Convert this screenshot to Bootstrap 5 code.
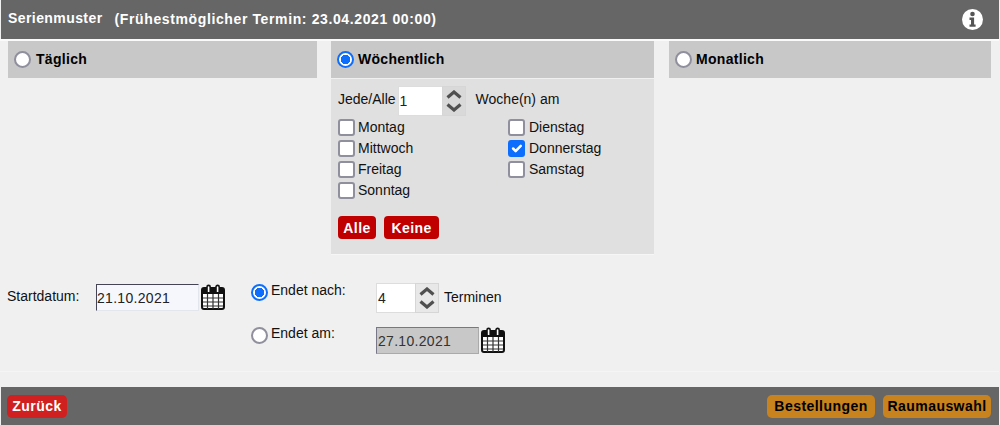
<!DOCTYPE html>
<html lang="de">
<head>
<meta charset="utf-8">
<title>Serienmuster</title>
<link href="https://cdn.jsdelivr.net/npm/bootstrap@5.3.0/dist/css/bootstrap.min.css" rel="stylesheet">
<style>
html,body{height:425px;overflow:hidden}
body{font-family:"Liberation Sans",Arial,sans-serif;font-size:14px;line-height:1.2;color:#111;background:#f0f0f0;margin:0}
.bar-top,.bar-bottom{background:#666;margin:0 1px;color:#fff}
.bar-top{height:39px;padding:0 7px;font-weight:700}
.title-a{letter-spacing:.42px;margin-top:-1px}
.title-b{letter-spacing:.62px;margin-left:12px}
.info-ico{margin-right:9px}
.main-area{height:333px;padding-left:8px;border-top:2px solid #fafafa;border-bottom:1px solid #f5f5f5;margin:0 1px 0 0}
.pane-a{width:309px}.pane-b{width:323px;margin-left:14px}.pane-c{width:322px;margin-left:15px}
.pane-head{height:37px;background:#c8c8c8;font-weight:700;padding:10px 6px;letter-spacing:.3px;color:#000}
.pane-body{background:#e0e0e0;height:175px;margin-top:1px;padding:7px 7px;box-shadow:0 1px 0 #f6f6f6}
.form-check-input.rb,.form-check-input.cb{width:17px;height:17px;margin:0;border:2px solid #8f8f9d;background-color:#fff;flex:none}
.form-check-input.rb{border-radius:50%}
.form-check-input.cb{border-radius:3px}
.form-check-input.rb:checked{background-color:#fff;border-color:#0d6efd;background-image:radial-gradient(circle,#0d6efd 0 4.5px,#fff 5px)}
.form-check-input.cb:checked{background-color:#0d6efd;border:0;background-size:17px 17px;background-position:center;background-origin:border-box}
.form-check-input:focus{box-shadow:none}
.num-box{height:30px;background:#fff;border:1px solid #ddd;border-right:0;padding:0 0 0 1px;font-size:14px;color:#222;font-family:inherit;border-radius:0;outline:0}
.spin-box{width:24px;height:30px;background:rgba(0,0,0,.03);border:1px solid #d6d6d6;gap:4px}
.text-up{margin-top:-4px}
.jede-lbl{margin-right:2px}
.woche-lbl{margin-left:10px}
.day-grid{display:grid;grid-template-columns:170px 1fr;row-gap:4px;margin-top:3px}
.day-item{height:17px;gap:3px;display:flex;align-items:center}
.day-item:nth-child(even){gap:4px}
.act-btn{border:0;border-radius:4px;font-weight:700;padding:1px 0 0;height:23px;font-size:14px;letter-spacing:.4px;font-family:inherit}
.red-btn{background:#c00000;color:#fff}
.btn-alle{width:38px}.btn-keine{width:55px;margin-left:8px}
.act-row{margin-top:17px}
.lower{height:92px;margin-top:22px;margin-left:-1px}
.start-col{padding-top:8px}
.lbl-start{width:89px;padding-top:4px}
.date-box{height:27px;border:1px solid #e4e6ee;border-top-color:#445;border-left-color:#445;background:#f5f7fc;padding:0;font-size:14px;letter-spacing:.3px;font-family:inherit;color:#222;width:103px;border-radius:0}
.date-box:disabled{background:#c8c8c8;border-color:#aaa;border-top-color:#778;border-left-color:#778;color:#333;padding-left:1px}
.cal-ico{margin-left:2px;flex:none}
.end-col{margin-left:26px;padding-top:7px}
.end-first{height:44px}
.end-lbl{width:125px;gap:3px}
.rad-one{margin-top:1px!important}
.txt-one{margin-top:-1px}
.txt-two{margin-top:-2px}
.termin-lbl{margin:6px 0 0 5px}
.bar-bottom{height:38px;margin-top:15px;padding:0 8px 0 6px}
.foot-btn{height:23px;border:0;border-radius:5px;font-weight:700;font-size:14px;letter-spacing:.45px;padding:1px 0 0;font-family:inherit}
.btn-back{background:#d02020;color:#fff;width:60px}
.btn-order{background:#c8821e;color:#000;width:108px}
.lbl-daily{margin-left:1px}
</style>
</head>
<body>
<div class="bar-top d-flex align-items-center justify-content-between">
  <div class="d-flex"><span class="title-a">Serienmuster</span><span class="title-b">(Frühestmöglicher Termin: 23.04.2021 00:00)</span></div>
  <svg class="info-ico" width="21" height="21" viewBox="0 0 21 21"><circle cx="10.5" cy="10.5" r="10.5" fill="#fff"/><circle cx="10.5" cy="5" r="2.3" fill="#555"/><path d="M7.5 8.6h4.6v6.9h1.5v2.3H7.5v-2.3H9V11H7.5z" fill="#555"/></svg>
</div>
<div class="main-area">
  <div class="d-flex">
    <div class="pane-a"><div class="pane-head d-flex align-items-center gap-1"><input class="form-check-input rb" type="radio" name="p"><span class="lbl-daily">Täglich</span></div></div>
    <div class="pane-b">
      <div class="pane-head d-flex align-items-center gap-1"><input class="form-check-input rb" type="radio" name="p" checked><span>Wöchentlich</span></div>
      <div class="pane-body">
        <div class="d-flex align-items-center">
          <span class="jede-lbl text-up">Jede/Alle</span>
          <input class="num-box" style="width:44px" value="1">
          <span class="spin-box d-flex flex-column align-items-center justify-content-center"><svg width="16" height="9" viewBox="0 0 16 9"><path d="M1.5 7.5l6.5-5.5 6.5 5.5" fill="none" stroke="#505050" stroke-width="3.2"/></svg><svg width="16" height="9" viewBox="0 0 16 9"><path d="M1.5 1.5l6.5 5.5 6.5-5.5" fill="none" stroke="#505050" stroke-width="3.2"/></svg></span>
          <span class="woche-lbl text-up">Woche(n) am</span>
        </div>
        <div class="day-grid">
          <label class="day-item"><input class="form-check-input cb" type="checkbox">Montag</label>
          <label class="day-item"><input class="form-check-input cb" type="checkbox">Dienstag</label>
          <label class="day-item"><input class="form-check-input cb" type="checkbox">Mittwoch</label>
          <label class="day-item"><input class="form-check-input cb" type="checkbox" checked>Donnerstag</label>
          <label class="day-item"><input class="form-check-input cb" type="checkbox">Freitag</label>
          <label class="day-item"><input class="form-check-input cb" type="checkbox">Samstag</label>
          <label class="day-item"><input class="form-check-input cb" type="checkbox">Sonntag</label>
        </div>
        <div class="act-row d-flex"><button class="act-btn red-btn btn-alle">Alle</button><button class="act-btn red-btn btn-keine">Keine</button></div>
      </div>
    </div>
    <div class="pane-c"><div class="pane-head d-flex align-items-center gap-1"><input class="form-check-input rb" type="radio" name="p"><span>Monatlich</span></div></div>
  </div>
  <div class="lower d-flex">
    <div class="start-col d-flex align-items-start"><span class="lbl-start">Startdatum:</span><input class="date-box" value="21.10.2021">
      <svg class="cal-ico" width="24" height="26" viewBox="0 0 24 26"><use href="#cal"/></svg></div>
    <div class="end-col d-flex flex-column">
      <div class="end-first d-flex align-items-start">
        <label class="end-lbl d-flex align-items-start"><input class="form-check-input rb rad-one" type="radio" name="e" checked><span class="txt-one">Endet nach:</span></label>
        <input class="num-box" style="width:39px" value="4">
        <span class="spin-box d-flex flex-column align-items-center justify-content-center"><svg width="16" height="9" viewBox="0 0 16 9"><path d="M1.5 7.5l6.5-5.5 6.5 5.5" fill="none" stroke="#505050" stroke-width="3.2"/></svg><svg width="16" height="9" viewBox="0 0 16 9"><path d="M1.5 1.5l6.5 5.5 6.5-5.5" fill="none" stroke="#505050" stroke-width="3.2"/></svg></span>
        <span class="termin-lbl">Terminen</span>
      </div>
      <div class="d-flex align-items-start">
        <label class="end-lbl d-flex align-items-start"><input class="form-check-input rb" type="radio" name="e"><span class="txt-two">Endet am:</span></label>
        <input class="date-box" disabled value="27.10.2021">
        <svg class="cal-ico" width="24" height="26" viewBox="0 0 24 26"><use href="#cal"/></svg>
      </div>
    </div>
  </div>
</div>
<div class="bar-bottom d-flex align-items-center justify-content-between">
  <button class="foot-btn btn-back">Zurück</button>
  <div class="d-flex gap-2"><button class="foot-btn btn-order">Bestellungen</button><button class="foot-btn btn-order">Raumauswahl</button></div>
</div>
<svg width="0" height="0" class="d-none"><defs><g id="cal"><rect x="1" y="4" width="22" height="21" rx="2" fill="#fff" stroke="#111" stroke-width="2"/><rect x="1" y="4" width="22" height="6" fill="#111"/><path d="M2 14h20M2 18h20M2 22h20M6.5 10v15M12 10v15M17.5 10v15" stroke="#333" stroke-width="1.2"/><path d="M6 8V3a1.6 1.6 0 0 1 3.2 0v5M15 8V3a1.6 1.6 0 0 1 3.2 0v5" fill="#fff" stroke="#111" stroke-width="1.6"/></g></defs></svg>
<script src="https://cdn.jsdelivr.net/npm/bootstrap@5.3.0/dist/js/bootstrap.bundle.min.js"></script>
</body>
</html>
